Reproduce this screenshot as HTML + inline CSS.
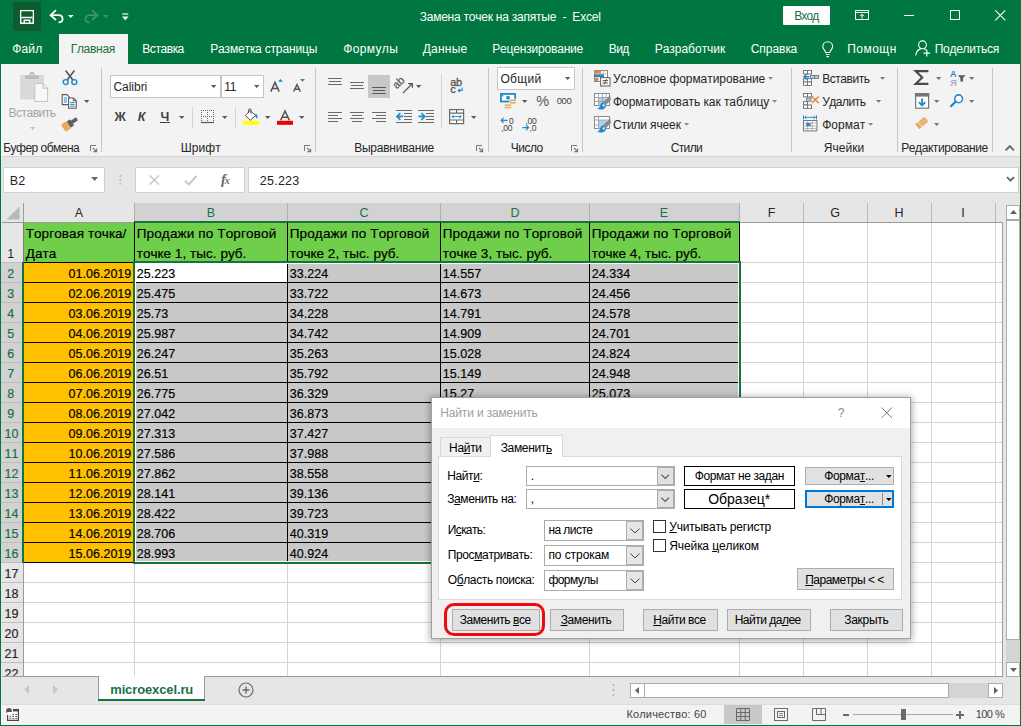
<!DOCTYPE html>
<html><head><meta charset="utf-8">
<style>
*{box-sizing:border-box;margin:0;padding:0}
html,body{width:1021px;height:726px;overflow:hidden;background:#fff}
body{font-family:"Liberation Sans",sans-serif;font-size:12px;color:#262626;position:relative}
#win{position:absolute;left:0;top:0;width:1021px;height:726px;background:#e6e6e6;overflow:hidden}
.b{position:absolute}
.t{position:absolute;white-space:pre;line-height:1;font-kerning:none}
.t u{text-decoration:underline;text-underline-offset:1px}
#grid .t{-webkit-text-stroke:0.18px currentColor}
svg{position:absolute;overflow:visible}
.btn{position:absolute;background:#e1e1e1;border:1px solid #adadad}
.cb{position:absolute;background:#fff;border:1px solid #ababab}
</style></head><body>
<div id="win">
<!--TITLE-->
<div class="b" style="left:0;top:0;width:1021px;height:64px;background:#007640"></div>
<div class="b" style="left:13px;top:2px;width:28px;height:29px;background:#0e5c2f"></div>
<div class="b" style="left:59px;top:34px;width:69px;height:31px;background:#f3f3f3"></div>
<div class="b" style="left:783px;top:6px;width:47px;height:19px;background:#fff;border-radius:1px"></div>
<!--save-->
<svg style="left:20px;top:10px" width="14" height="14"><path d="M0.75 0.75H13.25V13.25H0.75Z" fill="none" stroke="#fff" stroke-width="1.5"/><path d="M1.5 1.5H12.5V7H1.5Z" fill="#0e5c2f"/><path d="M1.5 7.5H12.5" stroke="#fff" stroke-width="1.5"/><path d="M4.25 13V10.25H9.75V13" fill="none" stroke="#fff" stroke-width="1.5"/></svg>
<!--undo-->
<svg style="left:49px;top:9px" width="15" height="14"><path d="M7 1.2L1.6 6.2L7 11" fill="none" stroke="#fff" stroke-width="1.8" stroke-linejoin="miter"/><path d="M2 6.2H9.5C12.5 6.2 13.6 8.3 13.6 10C13.6 11.8 12.3 13.3 9.5 13.3" fill="none" stroke="#fff" stroke-width="1.8"/></svg>
<svg style="left:68px;top:15px" width="6" height="3"><path d="M0 0H5.6L2.8 3Z" fill="#fff"/></svg>
<!--redo-->
<svg style="left:84px;top:9px" width="15" height="14" opacity="1"><path d="M8 1.2L13.4 6.2L8 11" fill="none" stroke="#3f9469" stroke-width="1.8"/><path d="M13 6.2H5.5C2.5 6.2 1.4 8.3 1.4 10C1.4 11.8 2.7 13.3 5.5 13.3" fill="none" stroke="#3f9469" stroke-width="1.8"/></svg>
<svg style="left:103px;top:15px" width="6" height="3"><path d="M0 0H5.6L2.8 3Z" fill="#3f9469"/></svg>
<!--customize-->
<svg style="left:122px;top:13px" width="7" height="8"><path d="M0.3 1H6.3" stroke="#fff" stroke-width="1.2"/><path d="M0 3.6H6.6L3.3 7.2Z" fill="#fff"/></svg>
<!--ribbon display options-->
<svg style="left:855px;top:10px" width="15" height="11"><path d="M0.5 0.5H13.5V9.5H0.5Z" fill="none" stroke="#fff" stroke-width="1"/><path d="M0.5 2.5H13.5" stroke="#fff" stroke-width="1"/><path d="M7 8.5V4.5M5 6.2L7 4.2L9 6.2" fill="none" stroke="#fff" stroke-width="1"/></svg>
<!--min-->
<div class="b" style="left:904px;top:15px;width:10px;height:1px;background:#fff"></div>
<!--max-->
<div class="b" style="left:950px;top:10px;width:10px;height:10px;border:1px solid #fff"></div>
<!--close-->
<svg style="left:995px;top:10px" width="11" height="11"><path d="M0.3 0.3L10.3 10.3M10.3 0.3L0.3 10.3" stroke="#fff" stroke-width="1.1" fill="none"/></svg>
<!--bulb-->
<svg style="left:822px;top:41px" width="12" height="17"><path d="M3.6 11.5C3.6 9.5 0.8 8.5 0.8 5.5C0.8 2.7 3 0.7 5.7 0.7C8.4 0.7 10.6 2.7 10.6 5.5C10.6 8.5 7.8 9.5 7.8 11.5Z" fill="none" stroke="#fff" stroke-width="1.1"/><path d="M3.8 13.5H7.6M4.4 15.6H7" stroke="#fff" stroke-width="1.1"/></svg>
<!--person-->
<svg style="left:915px;top:40px" width="17" height="17"><circle cx="7.5" cy="4.8" r="3.9" fill="none" stroke="#fff" stroke-width="1.1"/><path d="M0.8 15.5C1.2 11 4 9.2 6 8.6" fill="none" stroke="#fff" stroke-width="1.1"/><path d="M9 8.6C10.3 9 11 9.6 11.6 10.3" fill="none" stroke="#fff" stroke-width="1.1"/><path d="M8.5 13.2H15M11.8 10V16.4" stroke="#fff" stroke-width="1.2"/></svg>

<!--RIBBON-->
<div class="b" style="left:2px;top:64px;width:1018px;height:92px;background:#f3f3f3"></div>
<div class="b" style="left:2px;top:156px;width:1018px;height:1px;background:#d4d4d4"></div>
<!--ribbon separators-->
<div class="b" style="left:101px;top:68px;width:1px;height:84px;background:#c6c6c6"></div>
<div class="b" style="left:315px;top:68px;width:1px;height:84px;background:#c6c6c6"></div>
<div class="b" style="left:488px;top:68px;width:1px;height:84px;background:#c6c6c6"></div>
<div class="b" style="left:582px;top:68px;width:1px;height:84px;background:#c6c6c6"></div>
<div class="b" style="left:791px;top:68px;width:1px;height:84px;background:#c6c6c6"></div>
<div class="b" style="left:897px;top:68px;width:1px;height:84px;background:#c6c6c6"></div>
<div class="b" style="left:992px;top:68px;width:1px;height:84px;background:#c6c6c6"></div>
<!--font boxes-->
<div class="b" style="left:110px;top:75px;width:111px;height:23px;background:#fff;border:1px solid #c6c6c6"></div>
<div class="b" style="left:221px;top:75px;width:43px;height:23px;background:#fff;border:1px solid #c6c6c6"></div>
<div class="b" style="left:497px;top:67px;width:78px;height:23px;background:#fff;border:1px solid #c6c6c6"></div>
<div class="b" style="left:368px;top:75px;width:22px;height:23px;background:#c8c8c8"></div>
<!--paste (disabled)-->
<svg style="left:20px;top:72px" width="29" height="31"><rect x="0.2" y="3" width="23.8" height="24.5" rx="1" fill="#d9d9d9"/><path d="M5 7V3.5H9.5V1.5Q9.5 0 11 0H13Q14.5 0 14.5 1.5V3.5H19V7Z" fill="#bcbcbc"/><circle cx="12" cy="2.6" r="1" fill="#ececec"/><path d="M14.8 11.5H23L27.6 16.2V29.5H14.8Z" fill="#f8f8f8" stroke="#c2c2c2" stroke-width="1"/><path d="M23 11.5V16.2H27.6" fill="none" stroke="#c2c2c2" stroke-width="1"/></svg>
<svg style="left:30px;top:127px" width="6" height="3"><path d="M0 0H5.4L2.7 3Z" fill="#c0c0c0"/></svg>
<!--cut-->
<svg style="left:62px;top:70px" width="16" height="16"><path d="M3.6 0.6L11.2 10.6M12.4 0.6L4.8 10.6" stroke="#5a5a5a" stroke-width="1.7" fill="none"/><circle cx="3.7" cy="12.1" r="2.5" fill="none" stroke="#1e8bcd" stroke-width="1.4"/><circle cx="12.3" cy="12.1" r="2.5" fill="none" stroke="#1e8bcd" stroke-width="1.4"/></svg>
<!--copy-->
<svg style="left:61px;top:94px" width="17" height="15"><path d="M1.2 0.6H5.8L8.4 3.2V10.6H1.2Z" fill="#fff" stroke="#5a5a5a" stroke-width="1.1"/><path d="M2.8 4H6M2.8 6H6M2.8 8H6" stroke="#1e8bcd" stroke-width="1"/><path d="M7.6 4H12.4L15.2 6.8V14.2H7.6Z" fill="#fff" stroke="#5a5a5a" stroke-width="1.1"/><path d="M12.2 4V7H15.2" fill="none" stroke="#5a5a5a" stroke-width="0.9"/><path d="M9.2 8.6H13.6M9.2 10.4H13.6M9.2 12.2H13.6" stroke="#1e8bcd" stroke-width="1"/></svg>
<svg style="left:84px;top:100px" width="6" height="3"><path d="M0 0H5.4L2.7 3Z" fill="#5a5a5a"/></svg>
<!--format painter-->
<svg style="left:62px;top:116px" width="17" height="16"><g transform="rotate(-35 8.5 8)"><rect x="10.2" y="5.6" width="6.6" height="3.6" fill="#5f5f5f"/><rect x="6.6" y="3.8" width="4.2" height="7.4" rx="0.8" fill="#5f5f5f"/><path d="M6.4 3.2V11.8H2Q0.2 11.8 0.2 10V5Q0.2 3.2 2 3.2Z" fill="#e9a659"/><path d="M2 6V6.8M4 8.8V9.6" stroke="#f8d8a8" stroke-width="0.9"/></g></svg>
<!--font group-->
<svg style="left:211px;top:85px" width="6" height="3"><path d="M0 0H5.4L2.7 3Z" fill="#5a5a5a"/></svg>
<svg style="left:254px;top:85px" width="6" height="3"><path d="M0 0H5.4L2.7 3Z" fill="#5a5a5a"/></svg>
<svg style="left:179px;top:116px" width="6" height="3"><path d="M0 0H5.4L2.7 3Z" fill="#5a5a5a"/></svg>
<div class="b" style="left:192px;top:107px;width:1px;height:21px;background:#d4d4d4"></div>
<div class="b" style="left:235px;top:107px;width:1px;height:21px;background:#d4d4d4"></div>
<!--grow/shrink font-->
<svg style="left:270px;top:78px" width="14" height="14"><path d="M0.8 13.6L5 4.4L9.2 13.6M2.4 10.4H7.6" fill="none" stroke="#555" stroke-width="1.5"/><path d="M8 3.8H13L10.5 1Z" fill="#1e8bcd"/></svg>
<svg style="left:293px;top:78px" width="14" height="14"><path d="M0.6 13.6L4 6.6L7.4 13.6M1.9 11.2H6.1" fill="none" stroke="#555" stroke-width="1.4"/><path d="M7 1H12L9.5 3.8Z" fill="#1e8bcd"/></svg>
<!--borders-->
<svg style="left:201px;top:110px" width="14" height="14"><g stroke="#666" stroke-width="1" stroke-dasharray="1 1" fill="none"><path d="M0 0.5H13M0 6.5H13M0.5 0V12M6.5 0V12M12.5 0V12"/></g><path d="M0 12.5H13" stroke="#555" stroke-width="1.2"/></svg>
<svg style="left:222px;top:116px" width="6" height="3"><path d="M0 0H5.4L2.7 3Z" fill="#5a5a5a"/></svg>
<!--fill color-->
<svg style="left:243px;top:108px" width="17" height="17"><rect x="0" y="12.8" width="16" height="4" fill="#ffff00"/><path d="M7.2 2.6L12.6 7.4L7.4 12.2L2.2 7.4Z" fill="#fff" stroke="#555" stroke-width="1"/><path d="M5.6 5.2V2Q5.6 0.8 6.8 0.8Q8 0.8 8 2V5.6" fill="none" stroke="#555" stroke-width="1"/><path d="M12.6 5.4Q15.6 7.4 14 11Q13 9 12.2 8.2Z" fill="#1e8bcd"/></svg>
<svg style="left:265px;top:116px" width="6" height="3"><path d="M0 0H5.4L2.7 3Z" fill="#5a5a5a"/></svg>
<!--font color-->
<svg style="left:277px;top:110px" width="17" height="15"><rect x="0" y="10.8" width="16" height="4" fill="#ee0000"/><path d="M3.6 10.4L8 1L12.4 10.4M5.2 7.2H10.8" fill="none" stroke="#555" stroke-width="1.5"/></svg>
<svg style="left:299px;top:116px" width="6" height="3"><path d="M0 0H5.4L2.7 3Z" fill="#5a5a5a"/></svg>
<svg style="left:90px;top:145px" width="8" height="8"><path d="M0.5 6V0.5H6" fill="none" stroke="#777" stroke-width="1"/><path d="M3 3L6 6M6.6 3.4V6.6H3.4" fill="none" stroke="#777" stroke-width="1.1"/></svg>
<svg style="left:304px;top:145px" width="8" height="8"><path d="M0.5 6V0.5H6" fill="none" stroke="#777" stroke-width="1"/><path d="M3 3L6 6M6.6 3.4V6.6H3.4" fill="none" stroke="#777" stroke-width="1.1"/></svg>
<svg style="left:476px;top:145px" width="8" height="8"><path d="M0.5 6V0.5H6" fill="none" stroke="#777" stroke-width="1"/><path d="M3 3L6 6M6.6 3.4V6.6H3.4" fill="none" stroke="#777" stroke-width="1.1"/></svg>
<svg style="left:571px;top:145px" width="8" height="8"><path d="M0.5 6V0.5H6" fill="none" stroke="#777" stroke-width="1"/><path d="M3 3L6 6M6.6 3.4V6.6H3.4" fill="none" stroke="#777" stroke-width="1.1"/></svg>
<div class="b" style="left:160px;top:122px;width:10px;height:1px;background:#444"></div>

<!--alignment group-->
<div class="b" style="left:328px;top:78px;width:14px;height:1px;background:#6a6a6a"></div>
<div class="b" style="left:329px;top:81px;width:12px;height:1px;background:#6a6a6a"></div>
<div class="b" style="left:328px;top:84px;width:14px;height:1px;background:#6a6a6a"></div>
<div class="b" style="left:350px;top:82px;width:14px;height:1px;background:#6a6a6a"></div>
<div class="b" style="left:351px;top:85px;width:12px;height:1px;background:#6a6a6a"></div>
<div class="b" style="left:350px;top:88px;width:14px;height:1px;background:#6a6a6a"></div>
<div class="b" style="left:372px;top:87px;width:14px;height:1px;background:#5a5a5a"></div>
<div class="b" style="left:373px;top:90px;width:12px;height:1px;background:#5a5a5a"></div>
<div class="b" style="left:372px;top:93px;width:14px;height:1px;background:#5a5a5a"></div>
<div class="b" style="left:328px;top:112px;width:14px;height:1px;background:#6a6a6a"></div>
<div class="b" style="left:328px;top:115px;width:10px;height:1px;background:#6a6a6a"></div>
<div class="b" style="left:328px;top:118px;width:14px;height:1px;background:#6a6a6a"></div>
<div class="b" style="left:328px;top:121px;width:10px;height:1px;background:#6a6a6a"></div>
<div class="b" style="left:350px;top:112px;width:14px;height:1px;background:#6a6a6a"></div>
<div class="b" style="left:352px;top:115px;width:10px;height:1px;background:#6a6a6a"></div>
<div class="b" style="left:350px;top:118px;width:14px;height:1px;background:#6a6a6a"></div>
<div class="b" style="left:352px;top:121px;width:10px;height:1px;background:#6a6a6a"></div>
<div class="b" style="left:372px;top:112px;width:14px;height:1px;background:#6a6a6a"></div>
<div class="b" style="left:376px;top:115px;width:10px;height:1px;background:#6a6a6a"></div>
<div class="b" style="left:372px;top:118px;width:14px;height:1px;background:#6a6a6a"></div>
<div class="b" style="left:376px;top:121px;width:10px;height:1px;background:#6a6a6a"></div>
<div class="b" style="left:396px;top:110px;width:16px;height:1px;background:#6a6a6a"></div>
<div class="b" style="left:404px;top:113px;width:8px;height:1px;background:#6a6a6a"></div>
<div class="b" style="left:404px;top:116px;width:8px;height:1px;background:#6a6a6a"></div>
<div class="b" style="left:404px;top:119px;width:8px;height:1px;background:#6a6a6a"></div>
<div class="b" style="left:396px;top:122px;width:16px;height:1px;background:#6a6a6a"></div>
<div class="b" style="left:418px;top:110px;width:16px;height:1px;background:#6a6a6a"></div>
<div class="b" style="left:426px;top:113px;width:8px;height:1px;background:#6a6a6a"></div>
<div class="b" style="left:426px;top:116px;width:8px;height:1px;background:#6a6a6a"></div>
<div class="b" style="left:426px;top:119px;width:8px;height:1px;background:#6a6a6a"></div>
<div class="b" style="left:418px;top:122px;width:16px;height:1px;background:#6a6a6a"></div>
<svg style="left:396px;top:112px" width="8" height="9"><path d="M7.2 4.4H1.4M4.4 1L1 4.4L4.4 7.8" fill="none" stroke="#1e8bcd" stroke-width="1.7"/></svg>
<svg style="left:418px;top:112px" width="8" height="9"><path d="M0.4 4.4H6.4M3.4 1L6.8 4.4L3.4 7.8" fill="none" stroke="#1e8bcd" stroke-width="1.7"/></svg>
<!--orientation-->
<svg style="left:395px;top:77px" width="19" height="17"><g transform="translate(-1.2,-1.6) rotate(-45 6.5 8.5)"><text x="0" y="10" font-family="Liberation Sans" font-size="11" fill="#555" stroke="#555" stroke-width="0.2">ab</text></g><path d="M8 16L17 7M13 6.6H17.4V11" fill="none" stroke="#555" stroke-width="1.1"/></svg>
<svg style="left:416px;top:85px" width="6" height="3"><path d="M0 0H5.4L2.7 3Z" fill="#5a5a5a"/></svg>
<div class="b" style="left:441px;top:74px;width:1px;height:55px;background:#d4d4d4"></div>
<!--wrap text-->
<svg style="left:450px;top:77px" width="15" height="17"><text x="0.2" y="9.4" font-family="Liberation Sans" font-size="11" fill="#555" stroke="#555" stroke-width="0.3" letter-spacing="-0.2">ab</text><text x="0.2" y="16.4" font-family="Liberation Sans" font-size="11" fill="#555" stroke="#555" stroke-width="0.3">c</text><path d="M12.2 10.6V13.4H8.4M10 11.8L8.2 13.4L10 15" fill="none" stroke="#1e8bcd" stroke-width="1.1"/></svg>
<!--merge-->
<svg style="left:449px;top:109px" width="16" height="16"><rect x="0.6" y="0.6" width="14" height="14" fill="#fff" stroke="#6a6a6a" stroke-width="1.2"/><path d="M0.6 4.2H14.6M0.6 11H14.6M7.6 0.6V4.2M7.6 11V14.6" stroke="#6a6a6a" stroke-width="1.2"/><path d="M3 7.6H12.2M4.8 5.8L3 7.6L4.8 9.4M10.4 5.8L12.2 7.6L10.4 9.4" fill="none" stroke="#1e8bcd" stroke-width="1"/></svg>
<svg style="left:471px;top:116px" width="6" height="3"><path d="M0 0H5.4L2.7 3Z" fill="#5a5a5a"/></svg>
<!--number group-->
<svg style="left:565px;top:77px" width="6" height="3"><path d="M0 0H5.4L2.7 3Z" fill="#5a5a5a"/></svg>
<svg style="left:500px;top:93px" width="17" height="17"><rect x="0.9" y="0.9" width="14.2" height="7.6" fill="#fff" stroke="#1e8bcd" stroke-width="1.8"/><circle cx="8" cy="4.7" r="1.9" fill="#1e8bcd"/><rect x="1.8" y="1.8" width="1.6" height="1.6" fill="#1e8bcd"/><rect x="12.6" y="6" width="1.6" height="1.6" fill="#1e8bcd"/><g fill="#e9a659" stroke="#f3f3f3" stroke-width="0.8"><rect x="9.2" y="6.2" width="7" height="2.4" rx="1"/><rect x="9.2" y="8.6" width="7" height="2.4" rx="1"/><rect x="4.4" y="11" width="7" height="2.4" rx="1"/><rect x="4.4" y="13.4" width="7" height="2.4" rx="1"/></g></svg>
<svg style="left:522px;top:100px" width="6" height="3"><path d="M0 0H5.4L2.7 3Z" fill="#5a5a5a"/></svg>
<!--inc/dec decimal-->
<svg style="left:500px;top:117px" width="16" height="15"><text x="9" y="6.6" font-family="Liberation Sans" font-size="8.6" fill="#444">0</text><text x="1.2" y="13.8" font-family="Liberation Sans" font-size="8.6" fill="#444" letter-spacing="-0.3">,00</text><path d="M7.6 3.4H1.2M3.6 1L1.2 3.4L3.6 5.8" fill="none" stroke="#1e8bcd" stroke-width="1.2"/></svg>
<svg style="left:522px;top:117px" width="16" height="15"><text x="3.4" y="6.6" font-family="Liberation Sans" font-size="8.6" fill="#444" letter-spacing="-0.3">,00</text><text x="7.6" y="13.8" font-family="Liberation Sans" font-size="8.6" fill="#444" letter-spacing="-0.3">,0</text><path d="M0.4 10.6H6.6M4.2 8.2L6.6 10.6L4.2 13" fill="none" stroke="#1e8bcd" stroke-width="1.2"/></svg>

<!--styles group-->
<svg style="left:594px;top:70px" width="17" height="17"><rect x="0.5" y="0.5" width="13" height="11" fill="#fff" stroke="#8a8a8a" stroke-width="1"/><rect x="0" y="0.5" width="7" height="3" fill="#ed7d31"/><rect x="0" y="4.2" width="10" height="3" fill="#1e8bcd"/><rect x="0" y="7.9" width="4.5" height="3" fill="#ed7d31"/><path d="M9.5 0.5V3.5M0.5 3.8H13.5" stroke="#b0b0b0" stroke-width="0.8" fill="none"/><rect x="6.6" y="7.6" width="9.4" height="8.4" fill="#fff" stroke="#6a6a6a" stroke-width="1.1"/><path d="M8.6 10.6H14M8.6 13H14M12.6 9.2L10 14.4" stroke="#444" stroke-width="0.9" fill="none"/></svg>
<svg style="left:594px;top:93px" width="17" height="17"><rect x="0.5" y="0.5" width="15" height="12" fill="#fff" stroke="#8a8a8a" stroke-width="1"/><rect x="4.5" y="4.5" width="7.5" height="8" fill="#a9d3e6"/><path d="M0.5 4.5H15.5M0.5 8.5H12M4.5 0.5V12.5M8.5 0.5V12.5M12.2 0.5V5" stroke="#a0a0a0" stroke-width="0.9" fill="none"/><path d="M16 2.2L17 6.8L12 12L9.2 9.2Z" fill="#8a8a8a"/><path d="M9.2 9.2L12 12Q12.2 15 9.2 16.2Q6 17.2 3.2 15.8Q5.8 14.6 6 12.4Q6.6 9.6 9.2 9.2Z" fill="#1e8bcd"/><circle cx="9.7" cy="12.4" r="1.1" fill="#fff"/></svg>
<svg style="left:594px;top:116px" width="17" height="17"><rect x="0.5" y="0.5" width="15" height="12" fill="#fff" stroke="#8a8a8a" stroke-width="1"/><rect x="4.5" y="4" width="8" height="8.5" fill="#a9d3e6"/><path d="M0.5 4H15.5M4.5 0.5V12.5M0.5 9H4.5" stroke="#a0a0a0" stroke-width="0.9" fill="none"/><path d="M16 2.2L17 6.8L12 12L9.2 9.2Z" fill="#8a8a8a"/><path d="M9.2 9.2L12 12Q12.2 15 9.2 16.2Q6 17.2 3.2 15.8Q5.8 14.6 6 12.4Q6.6 9.6 9.2 9.2Z" fill="#1e8bcd"/><circle cx="9.7" cy="12.4" r="1.1" fill="#fff"/></svg>
<svg style="left:768px;top:77px" width="6" height="3"><path d="M0 0H5.2L2.6 2.8Z" fill="#8a8a8a"/></svg>
<svg style="left:772px;top:100px" width="6" height="3"><path d="M0 0H5.2L2.6 2.8Z" fill="#8a8a8a"/></svg>
<svg style="left:684px;top:123px" width="6" height="3"><path d="M0 0H5.2L2.6 2.8Z" fill="#8a8a8a"/></svg>
<!--cells group-->
<svg style="left:803px;top:70px" width="17" height="16"><g fill="#fff" stroke="#777" stroke-width="1"><rect x="0.5" y="0.5" width="4" height="3.4"/><rect x="4.5" y="0.5" width="4" height="3.4"/><rect x="0.5" y="8.6" width="4" height="3.4"/><rect x="4.5" y="8.6" width="4" height="3.4"/><rect x="0.5" y="12" width="4" height="3.4"/><rect x="4.5" y="12" width="4" height="3.4"/></g><rect x="7.6" y="5.4" width="4" height="3" fill="#a9d3e6" stroke="#777" stroke-width="0.9"/><rect x="11.6" y="5.4" width="4" height="3" fill="#a9d3e6" stroke="#777" stroke-width="0.9"/><path d="M6.4 6.8H1M3.6 4.2L1 6.8L3.6 9.4" fill="none" stroke="#1e8bcd" stroke-width="1.5"/></svg>
<svg style="left:803px;top:93px" width="17" height="16"><g fill="#fff" stroke="#777" stroke-width="1"><rect x="0.5" y="0.5" width="4" height="3.4"/><rect x="4.5" y="0.5" width="4" height="3.4"/><rect x="0.5" y="8.6" width="4" height="3.4"/><rect x="0.5" y="12" width="4" height="3.4"/><rect x="4.5" y="12" width="4" height="3.4"/></g><rect x="3.6" y="5" width="4.4" height="3.2" fill="#a9d3e6" stroke="#777" stroke-width="0.9"/><path d="M9 3.4L15.6 10M15.6 3.4L9 10" stroke="#ed7d31" stroke-width="1.4" fill="none"/></svg>
<svg style="left:803px;top:115px" width="16" height="17"><path d="M0.5 0.4V4.4M13.5 0.4V4.4" stroke="#1e8bcd" stroke-width="1"/><path d="M1.6 2.4H12.4M3.4 0.8L1.6 2.4L3.4 4M10.6 0.8L12.4 2.4L10.6 4" fill="none" stroke="#1e8bcd" stroke-width="0.9"/><rect x="0.5" y="5.5" width="13.4" height="10.4" fill="#fff" stroke="#777" stroke-width="1"/><path d="M0.5 8H14M0.5 11H14M0.5 13.6H14M4.6 5.5V16M9.2 5.5V16" stroke="#a0a0a0" stroke-width="0.8" fill="none"/><rect x="3.2" y="8" width="4.4" height="3.2" fill="#1e8bcd"/></svg>
<svg style="left:880px;top:77px" width="6" height="3"><path d="M0 0H5.2L2.6 2.8Z" fill="#777"/></svg>
<svg style="left:876px;top:100px" width="6" height="3"><path d="M0 0H5.2L2.6 2.8Z" fill="#777"/></svg>
<svg style="left:868px;top:123px" width="6" height="3"><path d="M0 0H5.2L2.6 2.8Z" fill="#8a8a8a"/></svg>
<!--editing group-->
<svg style="left:914px;top:70px" width="16" height="16"><path d="M14.4 1.1H1.6L8.2 7.5L1.6 13.9H14.4" fill="none" stroke="#4a4a4a" stroke-width="2.1" stroke-linejoin="miter"/></svg>
<svg style="left:936px;top:77px" width="6" height="3"><path d="M0 0H5.4L2.7 3Z" fill="#777"/></svg>
<svg style="left:950px;top:69px" width="17" height="18"><text x="0" y="7.6" font-family="Liberation Sans" font-weight="bold" font-size="9" fill="#1e8bcd">A</text><text x="0.2" y="16.6" font-family="Liberation Sans" font-weight="bold" font-size="9" fill="#b7a6c4">Я</text><path d="M7.8 6.2H15.6L13 9V12.6H10.4V9Z" fill="#5a5a5a"/></svg>
<svg style="left:969px;top:77px" width="6" height="3"><path d="M0 0H5.4L2.7 3Z" fill="#777"/></svg>
<svg style="left:915px;top:93px" width="15" height="16"><rect x="0.6" y="0.6" width="13" height="14.6" fill="#fff" stroke="#777" stroke-width="1.2"/><rect x="0" y="0" width="14.2" height="3.6" fill="#777"/><path d="M7.1 5.4V12.4M3.9 9.2L7.1 12.4L10.3 9.2" fill="none" stroke="#1e8bcd" stroke-width="1.8"/></svg>
<svg style="left:934px;top:100px" width="6" height="3"><path d="M0 0H5.4L2.7 3Z" fill="#777"/></svg>
<svg style="left:950px;top:94px" width="14" height="14"><circle cx="8.6" cy="4.8" r="3.9" fill="#fff" stroke="#1e8bcd" stroke-width="1.6"/><path d="M5.6 7.6L1 12.2" stroke="#1e8bcd" stroke-width="2.2" stroke-linecap="round"/></svg>
<svg style="left:969px;top:100px" width="6" height="3"><path d="M0 0H5.4L2.7 3Z" fill="#777"/></svg>
<svg style="left:915px;top:116px" width="14" height="14"><g transform="rotate(-40 7 7)"><rect x="1" y="3.6" width="3" height="6.4" fill="#e9a659"/><rect x="4.6" y="3.6" width="8.4" height="6.4" rx="1.2" fill="#eab27a"/></g></svg>
<svg style="left:934px;top:123px" width="6" height="3"><path d="M0 0H5.4L2.7 3Z" fill="#777"/></svg>
<svg style="left:1005px;top:145px" width="10" height="6"><path d="M0.6 5.4L4.8 1.2L9 5.4" fill="none" stroke="#6e6e6e" stroke-width="2"/></svg>

<!--FORMULA-->
<div class="b" style="left:3px;top:167px;width:102px;height:26px;background:#fff;border:1px solid #d0d0d0"></div>
<div class="b" style="left:135px;top:167px;width:110px;height:26px;background:#fff;border:1px solid #d0d0d0"></div>
<div class="b" style="left:248px;top:167px;width:771px;height:26px;background:#fff;border:1px solid #d0d0d0"></div>
<svg style="left:91px;top:177px" width="8" height="4"><path d="M0 0H7.2L3.6 4Z" fill="#6a6a6a"/></svg>
<svg style="left:119px;top:174px" width="3" height="11"><rect x="0.5" y="1" width="1.6" height="1.6" fill="#b4b4b4"/><rect x="0.5" y="5" width="1.6" height="1.6" fill="#b4b4b4"/><rect x="0.5" y="9" width="1.6" height="1.6" fill="#b4b4b4"/></svg>
<svg style="left:149px;top:175px" width="11" height="10"><path d="M0.6 0.6L10 9.4M10 0.6L0.6 9.4" stroke="#c3c3c3" stroke-width="1.4" fill="none"/></svg>
<svg style="left:184px;top:175px" width="14" height="11"><path d="M0.8 5.6L4.8 9.4L12.6 0.8" stroke="#c3c3c3" stroke-width="1.8" fill="none"/></svg>
<div class="t" style="left:221px;top:171.5px;font-family:'Liberation Serif',serif;font-style:italic;font-size:15px;color:#6a6a6a;font-weight:bold">f<span style="font-size:10px;position:relative;left:-1.2px;top:0.6px">x</span></div>
<svg style="left:1006px;top:176px" width="9" height="6"><path d="M1 1.2L4.5 4.6L8 1.2" fill="none" stroke="#5a5a5a" stroke-width="1.7"/></svg>

<!--GRID-->
<div id="grid" class="b" style="left:0;top:0;width:1021px;height:676px;overflow:hidden">
<div class="b" style="left:24px;top:223px;width:979px;height:453px;background:#fff;"></div>
<div class="b" style="left:1px;top:203px;width:1002px;height:19px;background:#e6e6e6;"></div>
<div class="b" style="left:135px;top:203px;width:605px;height:19px;background:#d2d2d2;"></div>
<div class="b" style="left:1px;top:263px;width:22px;height:299px;background:#d2d2d2;"></div>
<svg style="left:6px;top:206px" width="14" height="14"><path d="M13.5 0.5V13.5H0.5Z" fill="#b8b8b8"/></svg>
<div class="b" style="left:23px;top:203px;width:1px;height:19px;background:#b9b9b9;"></div>
<div class="b" style="left:134px;top:203px;width:1px;height:19px;background:#b0b0b0;"></div>
<div class="b" style="left:287px;top:203px;width:1px;height:19px;background:#b0b0b0;"></div>
<div class="b" style="left:440px;top:203px;width:1px;height:19px;background:#b0b0b0;"></div>
<div class="b" style="left:589px;top:203px;width:1px;height:19px;background:#b0b0b0;"></div>
<div class="b" style="left:739px;top:203px;width:1px;height:19px;background:#b0b0b0;"></div>
<div class="b" style="left:803px;top:203px;width:1px;height:19px;background:#b9b9b9;"></div>
<div class="b" style="left:867px;top:203px;width:1px;height:19px;background:#b9b9b9;"></div>
<div class="b" style="left:931px;top:203px;width:1px;height:19px;background:#b9b9b9;"></div>
<div class="b" style="left:995px;top:203px;width:1px;height:19px;background:#b9b9b9;"></div>
<div class="b" style="left:1px;top:262px;width:22px;height:1px;background:#bdbdbd;"></div>
<div class="b" style="left:1px;top:282px;width:22px;height:1px;background:#bdbdbd;"></div>
<div class="b" style="left:1px;top:302px;width:22px;height:1px;background:#bdbdbd;"></div>
<div class="b" style="left:1px;top:322px;width:22px;height:1px;background:#bdbdbd;"></div>
<div class="b" style="left:1px;top:342px;width:22px;height:1px;background:#bdbdbd;"></div>
<div class="b" style="left:1px;top:362px;width:22px;height:1px;background:#bdbdbd;"></div>
<div class="b" style="left:1px;top:382px;width:22px;height:1px;background:#bdbdbd;"></div>
<div class="b" style="left:1px;top:402px;width:22px;height:1px;background:#bdbdbd;"></div>
<div class="b" style="left:1px;top:422px;width:22px;height:1px;background:#bdbdbd;"></div>
<div class="b" style="left:1px;top:442px;width:22px;height:1px;background:#bdbdbd;"></div>
<div class="b" style="left:1px;top:462px;width:22px;height:1px;background:#bdbdbd;"></div>
<div class="b" style="left:1px;top:482px;width:22px;height:1px;background:#bdbdbd;"></div>
<div class="b" style="left:1px;top:502px;width:22px;height:1px;background:#bdbdbd;"></div>
<div class="b" style="left:1px;top:522px;width:22px;height:1px;background:#bdbdbd;"></div>
<div class="b" style="left:1px;top:542px;width:22px;height:1px;background:#bdbdbd;"></div>
<div class="b" style="left:1px;top:562px;width:22px;height:1px;background:#bdbdbd;"></div>
<div class="b" style="left:1px;top:582px;width:22px;height:1px;background:#bdbdbd;"></div>
<div class="b" style="left:1px;top:602px;width:22px;height:1px;background:#bdbdbd;"></div>
<div class="b" style="left:1px;top:622px;width:22px;height:1px;background:#bdbdbd;"></div>
<div class="b" style="left:1px;top:642px;width:22px;height:1px;background:#bdbdbd;"></div>
<div class="b" style="left:1px;top:662px;width:22px;height:1px;background:#bdbdbd;"></div>
<div class="b" style="left:1px;top:682px;width:22px;height:1px;background:#bdbdbd;"></div>
<div class="b" style="left:134px;top:223px;width:1px;height:453px;background:#d4d4d4;"></div>
<div class="b" style="left:287px;top:223px;width:1px;height:453px;background:#d4d4d4;"></div>
<div class="b" style="left:440px;top:223px;width:1px;height:453px;background:#d4d4d4;"></div>
<div class="b" style="left:589px;top:223px;width:1px;height:453px;background:#d4d4d4;"></div>
<div class="b" style="left:739px;top:223px;width:1px;height:453px;background:#d4d4d4;"></div>
<div class="b" style="left:803px;top:223px;width:1px;height:453px;background:#d4d4d4;"></div>
<div class="b" style="left:867px;top:223px;width:1px;height:453px;background:#d4d4d4;"></div>
<div class="b" style="left:931px;top:223px;width:1px;height:453px;background:#d4d4d4;"></div>
<div class="b" style="left:995px;top:223px;width:1px;height:453px;background:#d4d4d4;"></div>
<div class="b" style="left:24px;top:262px;width:979px;height:1px;background:#d4d4d4;"></div>
<div class="b" style="left:24px;top:282px;width:979px;height:1px;background:#d4d4d4;"></div>
<div class="b" style="left:24px;top:302px;width:979px;height:1px;background:#d4d4d4;"></div>
<div class="b" style="left:24px;top:322px;width:979px;height:1px;background:#d4d4d4;"></div>
<div class="b" style="left:24px;top:342px;width:979px;height:1px;background:#d4d4d4;"></div>
<div class="b" style="left:24px;top:362px;width:979px;height:1px;background:#d4d4d4;"></div>
<div class="b" style="left:24px;top:382px;width:979px;height:1px;background:#d4d4d4;"></div>
<div class="b" style="left:24px;top:402px;width:979px;height:1px;background:#d4d4d4;"></div>
<div class="b" style="left:24px;top:422px;width:979px;height:1px;background:#d4d4d4;"></div>
<div class="b" style="left:24px;top:442px;width:979px;height:1px;background:#d4d4d4;"></div>
<div class="b" style="left:24px;top:462px;width:979px;height:1px;background:#d4d4d4;"></div>
<div class="b" style="left:24px;top:482px;width:979px;height:1px;background:#d4d4d4;"></div>
<div class="b" style="left:24px;top:502px;width:979px;height:1px;background:#d4d4d4;"></div>
<div class="b" style="left:24px;top:522px;width:979px;height:1px;background:#d4d4d4;"></div>
<div class="b" style="left:24px;top:542px;width:979px;height:1px;background:#d4d4d4;"></div>
<div class="b" style="left:24px;top:562px;width:979px;height:1px;background:#d4d4d4;"></div>
<div class="b" style="left:24px;top:582px;width:979px;height:1px;background:#d4d4d4;"></div>
<div class="b" style="left:24px;top:602px;width:979px;height:1px;background:#d4d4d4;"></div>
<div class="b" style="left:24px;top:622px;width:979px;height:1px;background:#d4d4d4;"></div>
<div class="b" style="left:24px;top:642px;width:979px;height:1px;background:#d4d4d4;"></div>
<div class="b" style="left:24px;top:662px;width:979px;height:1px;background:#d4d4d4;"></div>
<div class="b" style="left:24px;top:682px;width:979px;height:1px;background:#d4d4d4;"></div>
<div class="b" style="left:2px;top:222px;width:1001px;height:1px;background:#9b9b9b;"></div>
<div class="b" style="left:23px;top:203px;width:1px;height:473px;background:#9b9b9b;"></div>
<div class="b" style="left:1002px;top:222px;width:1px;height:455px;background:#9b9b9b;"></div>
<div class="b" style="left:24px;top:223px;width:715px;height:39px;background:#6fcf4a;"></div>
<div class="b" style="left:24px;top:263px;width:110px;height:299px;background:#ffc000;"></div>
<div class="b" style="left:135px;top:263px;width:604px;height:299px;background:#c8c8c8;"></div>
<div class="b" style="left:135px;top:263px;width:152px;height:19px;background:#fff;"></div>
<div class="b" style="left:287px;top:223px;width:1px;height:340px;background:#000;"></div>
<div class="b" style="left:440px;top:223px;width:1px;height:340px;background:#000;"></div>
<div class="b" style="left:589px;top:223px;width:1px;height:340px;background:#000;"></div>
<div class="b" style="left:134px;top:223px;width:1px;height:40px;background:#000;"></div>
<div class="b" style="left:739px;top:223px;width:1px;height:40px;background:#000;"></div>
<div class="b" style="left:24px;top:282px;width:110px;height:1px;background:#000;"></div>
<div class="b" style="left:136px;top:282px;width:602px;height:1px;background:#000;"></div>
<div class="b" style="left:24px;top:302px;width:110px;height:1px;background:#000;"></div>
<div class="b" style="left:136px;top:302px;width:602px;height:1px;background:#000;"></div>
<div class="b" style="left:24px;top:322px;width:110px;height:1px;background:#000;"></div>
<div class="b" style="left:136px;top:322px;width:602px;height:1px;background:#000;"></div>
<div class="b" style="left:24px;top:342px;width:110px;height:1px;background:#000;"></div>
<div class="b" style="left:136px;top:342px;width:602px;height:1px;background:#000;"></div>
<div class="b" style="left:24px;top:362px;width:110px;height:1px;background:#000;"></div>
<div class="b" style="left:136px;top:362px;width:602px;height:1px;background:#000;"></div>
<div class="b" style="left:24px;top:382px;width:110px;height:1px;background:#000;"></div>
<div class="b" style="left:136px;top:382px;width:602px;height:1px;background:#000;"></div>
<div class="b" style="left:24px;top:402px;width:110px;height:1px;background:#000;"></div>
<div class="b" style="left:136px;top:402px;width:602px;height:1px;background:#000;"></div>
<div class="b" style="left:24px;top:422px;width:110px;height:1px;background:#000;"></div>
<div class="b" style="left:136px;top:422px;width:602px;height:1px;background:#000;"></div>
<div class="b" style="left:24px;top:442px;width:110px;height:1px;background:#000;"></div>
<div class="b" style="left:136px;top:442px;width:602px;height:1px;background:#000;"></div>
<div class="b" style="left:24px;top:462px;width:110px;height:1px;background:#000;"></div>
<div class="b" style="left:136px;top:462px;width:602px;height:1px;background:#000;"></div>
<div class="b" style="left:24px;top:482px;width:110px;height:1px;background:#000;"></div>
<div class="b" style="left:136px;top:482px;width:602px;height:1px;background:#000;"></div>
<div class="b" style="left:24px;top:502px;width:110px;height:1px;background:#000;"></div>
<div class="b" style="left:136px;top:502px;width:602px;height:1px;background:#000;"></div>
<div class="b" style="left:24px;top:522px;width:110px;height:1px;background:#000;"></div>
<div class="b" style="left:136px;top:522px;width:602px;height:1px;background:#000;"></div>
<div class="b" style="left:24px;top:542px;width:110px;height:1px;background:#000;"></div>
<div class="b" style="left:136px;top:542px;width:602px;height:1px;background:#000;"></div>
<div class="b" style="left:24px;top:562px;width:110px;height:1px;background:#000;"></div>
<div class="b" style="left:24px;top:262px;width:110px;height:1px;background:#000;"></div>
<div class="b" style="left:23px;top:223px;width:1px;height:40px;background:#7a7a7a;"></div>
<div class="b" style="left:135px;top:263px;width:604px;height:299px;background:transparent;border:1px solid #fff;"></div>
<div class="b" style="left:133px;top:261px;width:608px;height:303px;background:transparent;border:2px solid #15733f;"></div>
<div class="b" style="left:134px;top:221px;width:606px;height:2px;background:#15733f;"></div>
<div class="b" style="left:22px;top:262px;width:2px;height:301px;background:#15733f;"></div>

<div class="t" style="left:7.22px;top:267.75px;font-size:12.5px;color:#1a7044;">2</div>
<div class="t" style="left:7.22px;top:287.75px;font-size:12.5px;color:#1a7044;">3</div>
<div class="t" style="left:7.22px;top:307.75px;font-size:12.5px;color:#1a7044;">4</div>
<div class="t" style="left:7.22px;top:327.75px;font-size:12.5px;color:#1a7044;">5</div>
<div class="t" style="left:7.22px;top:347.75px;font-size:12.5px;color:#1a7044;">6</div>
<div class="t" style="left:7.22px;top:367.75px;font-size:12.5px;color:#1a7044;">7</div>
<div class="t" style="left:7.22px;top:387.75px;font-size:12.5px;color:#1a7044;">8</div>
<div class="t" style="left:7.22px;top:407.75px;font-size:12.5px;color:#1a7044;">9</div>
<div class="t" style="left:4.55px;top:427.75px;font-size:12.5px;color:#1a7044;">10</div>
<div class="t" style="left:4.55px;top:447.75px;font-size:12.5px;color:#1a7044;">11</div>
<div class="t" style="left:4.55px;top:467.75px;font-size:12.5px;color:#1a7044;">12</div>
<div class="t" style="left:4.55px;top:487.75px;font-size:12.5px;color:#1a7044;">13</div>
<div class="t" style="left:4.55px;top:507.75px;font-size:12.5px;color:#1a7044;">14</div>
<div class="t" style="left:4.55px;top:527.75px;font-size:12.5px;color:#1a7044;">15</div>
<div class="t" style="left:4.55px;top:547.75px;font-size:12.5px;color:#1a7044;">16</div>
<div class="t" style="left:4.55px;top:567.75px;font-size:12.5px;color:#262626;">17</div>
<div class="t" style="left:4.55px;top:587.75px;font-size:12.5px;color:#262626;">18</div>
<div class="t" style="left:4.55px;top:607.75px;font-size:12.5px;color:#262626;">19</div>
<div class="t" style="left:4.55px;top:627.75px;font-size:12.5px;color:#262626;">20</div>
<div class="t" style="left:4.55px;top:647.75px;font-size:12.5px;color:#262626;">21</div>
<div class="t" style="left:4.55px;top:667.75px;font-size:12.5px;color:#262626;">22</div>
<div class="t" style="left:136.70px;top:267.75px;font-size:12.5px;color:#000;letter-spacing:0.073px;">25.223</div>
<div class="t" style="left:136.70px;top:287.75px;font-size:12.5px;color:#000;letter-spacing:0.073px;">25.475</div>
<div class="t" style="left:136.70px;top:307.75px;font-size:12.5px;color:#000;letter-spacing:0.080px;">25.73</div>
<div class="t" style="left:136.70px;top:327.75px;font-size:12.5px;color:#000;letter-spacing:0.073px;">25.987</div>
<div class="t" style="left:136.70px;top:347.75px;font-size:12.5px;color:#000;letter-spacing:0.073px;">26.247</div>
<div class="t" style="left:136.70px;top:367.75px;font-size:12.5px;color:#000;letter-spacing:0.080px;">26.51</div>
<div class="t" style="left:136.70px;top:387.75px;font-size:12.5px;color:#000;letter-spacing:0.073px;">26.775</div>
<div class="t" style="left:136.70px;top:407.75px;font-size:12.5px;color:#000;letter-spacing:0.073px;">27.042</div>
<div class="t" style="left:136.70px;top:427.75px;font-size:12.5px;color:#000;letter-spacing:0.073px;">27.313</div>
<div class="t" style="left:136.70px;top:447.75px;font-size:12.5px;color:#000;letter-spacing:0.073px;">27.586</div>
<div class="t" style="left:136.70px;top:467.75px;font-size:12.5px;color:#000;letter-spacing:0.073px;">27.862</div>
<div class="t" style="left:136.70px;top:487.75px;font-size:12.5px;color:#000;letter-spacing:0.073px;">28.141</div>
<div class="t" style="left:136.70px;top:507.75px;font-size:12.5px;color:#000;letter-spacing:0.073px;">28.422</div>
<div class="t" style="left:136.70px;top:527.75px;font-size:12.5px;color:#000;letter-spacing:0.073px;">28.706</div>
<div class="t" style="left:136.70px;top:547.75px;font-size:12.5px;color:#000;letter-spacing:0.073px;">28.993</div>
<div class="t" style="left:289.70px;top:267.75px;font-size:12.5px;color:#000;letter-spacing:0.073px;">33.224</div>
<div class="t" style="left:289.70px;top:287.75px;font-size:12.5px;color:#000;letter-spacing:0.073px;">33.722</div>
<div class="t" style="left:289.70px;top:307.75px;font-size:12.5px;color:#000;letter-spacing:0.073px;">34.228</div>
<div class="t" style="left:289.70px;top:327.75px;font-size:12.5px;color:#000;letter-spacing:0.073px;">34.742</div>
<div class="t" style="left:289.70px;top:347.75px;font-size:12.5px;color:#000;letter-spacing:0.073px;">35.263</div>
<div class="t" style="left:289.70px;top:367.75px;font-size:12.5px;color:#000;letter-spacing:0.073px;">35.792</div>
<div class="t" style="left:289.70px;top:387.75px;font-size:12.5px;color:#000;letter-spacing:0.073px;">36.329</div>
<div class="t" style="left:289.70px;top:407.75px;font-size:12.5px;color:#000;letter-spacing:0.073px;">36.873</div>
<div class="t" style="left:289.70px;top:427.75px;font-size:12.5px;color:#000;letter-spacing:0.073px;">37.427</div>
<div class="t" style="left:289.70px;top:447.75px;font-size:12.5px;color:#000;letter-spacing:0.073px;">37.988</div>
<div class="t" style="left:289.70px;top:467.75px;font-size:12.5px;color:#000;letter-spacing:0.073px;">38.558</div>
<div class="t" style="left:289.70px;top:487.75px;font-size:12.5px;color:#000;letter-spacing:0.073px;">39.136</div>
<div class="t" style="left:289.70px;top:507.75px;font-size:12.5px;color:#000;letter-spacing:0.073px;">39.723</div>
<div class="t" style="left:289.70px;top:527.75px;font-size:12.5px;color:#000;letter-spacing:0.073px;">40.319</div>
<div class="t" style="left:289.70px;top:547.75px;font-size:12.5px;color:#000;letter-spacing:0.073px;">40.924</div>
<div class="t" style="left:442.70px;top:267.75px;font-size:12.5px;color:#000;letter-spacing:0.073px;">14.557</div>
<div class="t" style="left:442.70px;top:287.75px;font-size:12.5px;color:#000;letter-spacing:0.073px;">14.673</div>
<div class="t" style="left:442.70px;top:307.75px;font-size:12.5px;color:#000;letter-spacing:0.073px;">14.791</div>
<div class="t" style="left:442.70px;top:327.75px;font-size:12.5px;color:#000;letter-spacing:0.073px;">14.909</div>
<div class="t" style="left:442.70px;top:347.75px;font-size:12.5px;color:#000;letter-spacing:0.073px;">15.028</div>
<div class="t" style="left:442.70px;top:367.75px;font-size:12.5px;color:#000;letter-spacing:0.073px;">15.149</div>
<div class="t" style="left:442.70px;top:387.75px;font-size:12.5px;color:#000;letter-spacing:0.080px;">15.27</div>
<div class="t" style="left:442.70px;top:407.75px;font-size:12.5px;color:#000;letter-spacing:0.073px;">15.393</div>
<div class="t" style="left:442.70px;top:427.75px;font-size:12.5px;color:#000;letter-spacing:0.073px;">15.517</div>
<div class="t" style="left:442.70px;top:447.75px;font-size:12.5px;color:#000;letter-spacing:0.073px;">15.642</div>
<div class="t" style="left:442.70px;top:467.75px;font-size:12.5px;color:#000;letter-spacing:0.073px;">15.768</div>
<div class="t" style="left:442.70px;top:487.75px;font-size:12.5px;color:#000;letter-spacing:0.073px;">15.895</div>
<div class="t" style="left:442.70px;top:507.75px;font-size:12.5px;color:#000;letter-spacing:0.073px;">16.023</div>
<div class="t" style="left:442.70px;top:527.75px;font-size:12.5px;color:#000;letter-spacing:0.073px;">16.152</div>
<div class="t" style="left:442.70px;top:547.75px;font-size:12.5px;color:#000;letter-spacing:0.073px;">16.282</div>
<div class="t" style="left:591.70px;top:267.75px;font-size:12.5px;color:#000;letter-spacing:0.073px;">24.334</div>
<div class="t" style="left:591.70px;top:287.75px;font-size:12.5px;color:#000;letter-spacing:0.073px;">24.456</div>
<div class="t" style="left:591.70px;top:307.75px;font-size:12.5px;color:#000;letter-spacing:0.073px;">24.578</div>
<div class="t" style="left:591.70px;top:327.75px;font-size:12.5px;color:#000;letter-spacing:0.073px;">24.701</div>
<div class="t" style="left:591.70px;top:347.75px;font-size:12.5px;color:#000;letter-spacing:0.073px;">24.824</div>
<div class="t" style="left:591.70px;top:367.75px;font-size:12.5px;color:#000;letter-spacing:0.073px;">24.948</div>
<div class="t" style="left:591.70px;top:387.75px;font-size:12.5px;color:#000;letter-spacing:0.073px;">25.073</div>
<div class="t" style="left:591.70px;top:407.75px;font-size:12.5px;color:#000;letter-spacing:0.073px;">25.199</div>
<div class="t" style="left:591.70px;top:427.75px;font-size:12.5px;color:#000;letter-spacing:0.073px;">25.326</div>
<div class="t" style="left:591.70px;top:447.75px;font-size:12.5px;color:#000;letter-spacing:0.073px;">25.454</div>
<div class="t" style="left:591.70px;top:467.75px;font-size:12.5px;color:#000;letter-spacing:0.073px;">25.583</div>
<div class="t" style="left:591.70px;top:487.75px;font-size:12.5px;color:#000;letter-spacing:0.073px;">25.713</div>
<div class="t" style="left:591.70px;top:507.75px;font-size:12.5px;color:#000;letter-spacing:0.073px;">25.844</div>
<div class="t" style="left:591.70px;top:527.75px;font-size:12.5px;color:#000;letter-spacing:0.073px;">25.976</div>
<div class="t" style="left:591.70px;top:547.75px;font-size:12.5px;color:#000;letter-spacing:0.073px;">26.109</div>
<div class="t" style="left:68.50px;top:267.75px;font-size:12.5px;color:#000;letter-spacing:0.026px;">01.06.2019</div>
<div class="t" style="left:68.50px;top:287.75px;font-size:12.5px;color:#000;letter-spacing:0.026px;">02.06.2019</div>
<div class="t" style="left:68.50px;top:307.75px;font-size:12.5px;color:#000;letter-spacing:0.026px;">03.06.2019</div>
<div class="t" style="left:68.50px;top:327.75px;font-size:12.5px;color:#000;letter-spacing:0.026px;">04.06.2019</div>
<div class="t" style="left:68.50px;top:347.75px;font-size:12.5px;color:#000;letter-spacing:0.026px;">05.06.2019</div>
<div class="t" style="left:68.50px;top:367.75px;font-size:12.5px;color:#000;letter-spacing:0.026px;">06.06.2019</div>
<div class="t" style="left:68.50px;top:387.75px;font-size:12.5px;color:#000;letter-spacing:0.026px;">07.06.2019</div>
<div class="t" style="left:68.50px;top:407.75px;font-size:12.5px;color:#000;letter-spacing:0.026px;">08.06.2019</div>
<div class="t" style="left:68.50px;top:427.75px;font-size:12.5px;color:#000;letter-spacing:0.026px;">09.06.2019</div>
<div class="t" style="left:68.50px;top:447.75px;font-size:12.5px;color:#000;letter-spacing:0.026px;">10.06.2019</div>
<div class="t" style="left:68.50px;top:467.75px;font-size:12.5px;color:#000;letter-spacing:0.026px;">11.06.2019</div>
<div class="t" style="left:68.50px;top:487.75px;font-size:12.5px;color:#000;letter-spacing:0.026px;">12.06.2019</div>
<div class="t" style="left:68.50px;top:507.75px;font-size:12.5px;color:#000;letter-spacing:0.026px;">13.06.2019</div>
<div class="t" style="left:68.50px;top:527.75px;font-size:12.5px;color:#000;letter-spacing:0.026px;">14.06.2019</div>
<div class="t" style="left:68.50px;top:547.75px;font-size:12.5px;color:#000;letter-spacing:0.026px;">15.06.2019</div>
<div class="t" style="left:25.70px;top:226.75px;font-size:13.5px;color:#000;letter-spacing:0.091px;">Торговая точка/</div>
<div class="t" style="left:25.70px;top:246.75px;font-size:13.5px;color:#000;letter-spacing:0.085px;">Дата</div>
<div class="t" style="left:136.70px;top:226.75px;font-size:13.5px;color:#000;letter-spacing:0.149px;">Продажи по Торговой</div>
<div class="t" style="left:136.70px;top:246.75px;font-size:13.5px;color:#000;letter-spacing:0.048px;">точке 1, тыс. руб.</div>
<div class="t" style="left:289.70px;top:226.75px;font-size:13.5px;color:#000;letter-spacing:0.149px;">Продажи по Торговой</div>
<div class="t" style="left:289.70px;top:246.75px;font-size:13.5px;color:#000;letter-spacing:0.048px;">точке 2, тыс. руб.</div>
<div class="t" style="left:442.70px;top:226.75px;font-size:13.5px;color:#000;letter-spacing:0.149px;">Продажи по Торговой</div>
<div class="t" style="left:442.70px;top:246.75px;font-size:13.5px;color:#000;letter-spacing:0.048px;">точке 3, тыс. руб.</div>
<div class="t" style="left:591.70px;top:226.75px;font-size:13.5px;color:#000;letter-spacing:0.149px;">Продажи по Торговой</div>
<div class="t" style="left:591.70px;top:246.75px;font-size:13.5px;color:#000;letter-spacing:0.048px;">точке 4, тыс. руб.</div>

</div>
<!--BOTTOM-->
<!--sheet tab bar-->
<div class="b" style="left:2px;top:676px;width:1018px;height:28px;background:#e6e6e6"></div>
<div class="b" style="left:2px;top:676px;width:1001px;height:1px;background:#9b9b9b"></div>
<div class="b" style="left:98px;top:676px;width:107px;height:25px;background:#fff;border-left:1px solid #9b9b9b;border-right:1px solid #9b9b9b"></div>
<div class="b" style="left:98px;top:699px;width:107px;height:2px;background:#15733f"></div>
<svg style="left:24px;top:685px" width="6" height="9"><path d="M5 0V9L0 4.5Z" fill="#c6c6c6"/></svg>
<svg style="left:53px;top:685px" width="6" height="9"><path d="M0 0V9L5 4.5Z" fill="#c6c6c6"/></svg>
<svg style="left:238px;top:682px" width="16" height="16"><circle cx="8" cy="8" r="7" fill="none" stroke="#6a6a6a" stroke-width="1.2"/><path d="M4.5 8H11.5M8 4.5V11.5" stroke="#6a6a6a" stroke-width="1.4"/></svg>
<!--hscroll-->
<svg style="left:612px;top:683px" width="3" height="14"><circle cx="1.5" cy="2" r="1" fill="#b0b0b0"/><circle cx="1.5" cy="7" r="1" fill="#b0b0b0"/><circle cx="1.5" cy="12" r="1" fill="#b0b0b0"/></svg>
<div class="b" style="left:630px;top:683px;width:373px;height:15px;background:#d4d4d4"></div>
<div class="b" style="left:630px;top:683px;width:15px;height:15px;background:#fff;border:1px solid #ababab"></div>
<div class="b" style="left:644px;top:683px;width:305px;height:15px;background:#fff;border:1px solid #ababab"></div>
<div class="b" style="left:988px;top:683px;width:15px;height:15px;background:#fff;border:1px solid #ababab"></div>
<svg style="left:635px;top:687px" width="4" height="7"><path d="M4 0V7L0 3.5Z" fill="#606060"/></svg>
<svg style="left:994px;top:687px" width="4" height="7"><path d="M0 0V7L4 3.5Z" fill="#606060"/></svg>
<!--vscroll-->
<div class="b" style="left:1006px;top:205px;width:14px;height:471px;background:#d4d4d4"></div>
<div class="b" style="left:1006px;top:205px;width:14px;height:15px;background:#fff;border:1px solid #ababab"></div>
<div class="b" style="left:1006px;top:220px;width:14px;height:420px;background:#fff;border:1px solid #ababab"></div>
<div class="b" style="left:1006px;top:662px;width:14px;height:15px;background:#fff;border:1px solid #ababab"></div>
<svg style="left:1010px;top:210px" width="7" height="4"><path d="M0 4H7L3.5 0Z" fill="#606060"/></svg>
<svg style="left:1010px;top:668px" width="7" height="4"><path d="M0 0H7L3.5 4Z" fill="#606060"/></svg>
<!--status bar-->
<div class="b" style="left:2px;top:704px;width:1018px;height:21px;background:#f3f3f3"></div>
<div class="b" style="left:2px;top:704px;width:1018px;height:1px;background:#dcdcdc"></div>
<div class="b" style="left:724px;top:705px;width:38px;height:20px;background:#c8c8c8"></div>
<svg style="left:736px;top:708px" width="14" height="14"><path d="M0.5 0.5H13.5V12.5H0.5ZM0.5 4.5H13.5M0.5 8.5H13.5M4.8 0.5V12.5M9.2 0.5V12.5" fill="none" stroke="#6a6a6a" stroke-width="1"/></svg>
<svg style="left:774px;top:708px" width="15" height="14"><rect x="0.5" y="0.5" width="13" height="12" fill="none" stroke="#6a6a6a" stroke-width="1"/><rect x="3.5" y="3.5" width="7" height="6" fill="none" stroke="#6a6a6a" stroke-width="1"/><path d="M5 5.5H9M5 7.5H9" stroke="#6a6a6a" stroke-width="0.8"/></svg>
<svg style="left:812px;top:708px" width="15" height="14"><path d="M0.5 0.5H13.5V12.5H0.5ZM4.5 0.5V6.5H13.5M9 0.5V6.5" fill="none" stroke="#6a6a6a" stroke-width="1"/></svg>
<div class="b" style="left:843px;top:714px;width:6px;height:2px;background:#6a6a6a"></div>
<div class="b" style="left:853px;top:714px;width:100px;height:1px;background:#a8a8a8"></div>
<div class="b" style="left:901px;top:709px;width:5px;height:11px;background:#6a6a6a"></div>
<div class="b" style="left:956px;top:714px;width:8px;height:2px;background:#6a6a6a"></div>
<div class="b" style="left:959px;top:711px;width:2px;height:8px;background:#6a6a6a"></div>
<!--macro icon-->
<svg style="left:6px;top:708px" width="14" height="14"><circle cx="3" cy="3" r="2.9" fill="#5a5359"/><rect x="1.2" y="4" width="11.6" height="9" fill="#fff"/><path d="M7 2.2H12.4V12.4H1.6V7" fill="none" stroke="#4a4449" stroke-width="1.2"/><rect x="7" y="1" width="6" height="2.4" fill="#4a4449"/><path d="M3.4 8.4H5.2M6.4 6.4H8.2M9.4 6.4H11.2M6.4 8.4H8.2M9.4 8.4H11.2M3.4 10.4H5.2M6.4 10.4H8.2M9.4 10.4H11.2" stroke="#4a4449" stroke-width="0.9"/></svg>

<div class="t" style="left:419.70px;top:11.00px;font-size:12px;color:#ffffff;letter-spacing:-0.229px;">Замена точек на запятые  -  Excel</div>
<div class="t" style="left:794.20px;top:10.00px;font-size:12px;color:#1a7044;letter-spacing:-0.862px;">Вход</div>
<div class="t" style="left:12.20px;top:43.00px;font-size:12px;color:#ffffff;letter-spacing:0.195px;">Файл</div>
<div class="t" style="left:70.70px;top:43.00px;font-size:12px;color:#1a7044;letter-spacing:-0.293px;">Главная</div>
<div class="t" style="left:142.20px;top:43.00px;font-size:12px;color:#ffffff;letter-spacing:-0.397px;">Вставка</div>
<div class="t" style="left:210.20px;top:43.00px;font-size:12px;color:#ffffff;letter-spacing:-0.152px;">Разметка страницы</div>
<div class="t" style="left:343.20px;top:43.00px;font-size:12px;color:#ffffff;letter-spacing:0.373px;">Формулы</div>
<div class="t" style="left:422.70px;top:43.00px;font-size:12px;color:#ffffff;letter-spacing:0.248px;">Данные</div>
<div class="t" style="left:492.20px;top:43.00px;font-size:12px;color:#ffffff;letter-spacing:-0.182px;">Рецензирование</div>
<div class="t" style="left:608.70px;top:43.00px;font-size:12px;color:#ffffff;letter-spacing:-0.559px;">Вид</div>
<div class="t" style="left:654.70px;top:43.00px;font-size:12px;color:#ffffff;letter-spacing:-0.018px;">Разработчик</div>
<div class="t" style="left:750.70px;top:43.00px;font-size:12px;color:#ffffff;letter-spacing:-0.035px;">Справка</div>
<div class="t" style="left:847.20px;top:43.00px;font-size:12px;color:#ffffff;letter-spacing:0.473px;">Помощн</div>
<div class="t" style="left:934.70px;top:43.00px;font-size:12px;color:#ffffff;letter-spacing:-0.260px;">Поделиться</div>
<div class="t" style="left:3.20px;top:142.00px;font-size:12px;color:#262626;letter-spacing:-0.509px;">Буфер обмена</div>
<div class="t" style="left:180.70px;top:142.00px;font-size:12px;color:#262626;letter-spacing:0.088px;">Шрифт</div>
<div class="t" style="left:354.20px;top:142.00px;font-size:12px;color:#262626;letter-spacing:-0.239px;">Выравнивание</div>
<div class="t" style="left:510.70px;top:142.00px;font-size:12px;color:#262626;letter-spacing:-0.448px;">Число</div>
<div class="t" style="left:670.70px;top:142.00px;font-size:12px;color:#262626;letter-spacing:-0.620px;">Стили</div>
<div class="t" style="left:823.70px;top:142.00px;font-size:12px;color:#262626;letter-spacing:0.070px;">Ячейки</div>
<div class="t" style="left:901.20px;top:142.00px;font-size:12px;color:#262626;letter-spacing:-0.393px;">Редактирование</div>
<div class="t" style="left:8.50px;top:107.00px;font-size:12px;color:#a6a6a6;letter-spacing:-0.500px;">Вставить</div>
<div class="t" style="left:113.40px;top:81.00px;font-size:12px;color:#262626;letter-spacing:-0.019px;">Calibri</div>
<div class="t" style="left:224.20px;top:81.00px;font-size:12px;color:#262626;letter-spacing:-1.200px;">11</div>
<div class="t" style="left:114.40px;top:110.75px;font-size:12.5px;color:#444;font-weight:bold;">Ж</div>
<div class="t" style="left:137.70px;top:110.75px;font-size:12.5px;color:#444;font-weight:bold;font-style:italic;">К</div>
<div class="t" style="left:160.40px;top:110.75px;font-size:12.5px;color:#444;font-weight:bold;">Ч</div>
<div class="t" style="left:500.50px;top:73.00px;font-size:12px;color:#262626;letter-spacing:0.275px;">Общий</div>
<div class="t" style="left:613.00px;top:73.00px;font-size:12px;color:#262626;letter-spacing:-0.065px;">Условное форматирование</div>
<div class="t" style="left:613.00px;top:96.00px;font-size:12px;color:#262626;letter-spacing:-0.038px;">Форматировать как таблицу</div>
<div class="t" style="left:613.00px;top:119.00px;font-size:12px;color:#262626;letter-spacing:-0.137px;">Стили ячеек</div>
<div class="t" style="left:822.20px;top:73.00px;font-size:12px;color:#262626;letter-spacing:-0.443px;">Вставить</div>
<div class="t" style="left:822.20px;top:96.00px;font-size:12px;color:#262626;letter-spacing:-0.494px;">Удалить</div>
<div class="t" style="left:822.20px;top:119.00px;font-size:12px;color:#262626;letter-spacing:0.042px;">Формат</div>
<div class="t" style="left:536.30px;top:94.25px;font-size:14.5px;color:#555;">%</div>
<div class="t" style="left:556.70px;top:95.75px;font-size:9.5px;color:#444;letter-spacing:-0.430px;">000</div>
<div class="t" style="left:9.70px;top:174.75px;font-size:12.5px;color:#262626;letter-spacing:0.303px;">B2</div>
<div class="t" style="left:259.70px;top:174.75px;font-size:12.5px;color:#262626;letter-spacing:0.273px;">25.223</div>
<div class="t" style="left:74.83px;top:206.75px;font-size:12.5px;color:#262626;">A</div>
<div class="t" style="left:767.68px;top:206.75px;font-size:12.5px;color:#262626;">F</div>
<div class="t" style="left:830.13px;top:206.75px;font-size:12.5px;color:#262626;">G</div>
<div class="t" style="left:894.48px;top:206.75px;font-size:12.5px;color:#262626;">H</div>
<div class="t" style="left:961.26px;top:206.75px;font-size:12.5px;color:#262626;">I</div>
<div class="t" style="left:206.83px;top:206.75px;font-size:12.5px;color:#1a7044;">B</div>
<div class="t" style="left:359.48px;top:206.75px;font-size:12.5px;color:#1a7044;">C</div>
<div class="t" style="left:510.48px;top:206.75px;font-size:12.5px;color:#1a7044;">D</div>
<div class="t" style="left:659.83px;top:206.75px;font-size:12.5px;color:#1a7044;">E</div>
<div class="t" style="left:7.22px;top:247.75px;font-size:12.5px;color:#262626;">1</div>
<div class="t" style="left:110.20px;top:683.00px;font-size:13px;color:#1a7044;font-weight:bold;letter-spacing:-0.121px;">microexcel.ru</div>
<div class="t" style="left:626.40px;top:708.50px;font-size:11px;color:#444;letter-spacing:0.162px;">Количество: 60</div>
<div class="t" style="left:975.70px;top:708.50px;font-size:11px;color:#444;letter-spacing:-0.526px;">100 %</div>

<!--DIALOG-->
<div id="dlg" class="b" style="left:0;top:0;width:1021px;height:726px">
<div class="b" style="left:431px;top:397px;width:480px;height:242px;background:#f0f0f0;border:1px solid #a0a0a0;box-shadow:0 1px 7px 1px rgba(0,0,0,.33)"></div>
<div class="b" style="left:432px;top:398px;width:478px;height:30px;background:#fff"></div>
<svg style="left:881px;top:407px" width="12" height="12"><path d="M0.5 0.5L11 11M11 0.5L0.5 11" stroke="#777" stroke-width="1" fill="none"/></svg>
<!--tab panel-->
<div class="b" style="left:438px;top:456px;width:464px;height:144px;background:#fff;border:1px solid #d9d9d9"></div>
<div class="b" style="left:440px;top:437px;width:51px;height:20px;background:#f0f0f0;border:1px solid #d9d9d9;border-right:none"></div>
<div class="b" style="left:490px;top:435px;width:73px;height:22px;background:#fff;border:1px solid #d9d9d9;border-bottom:none"></div>
<!--combos row1/2-->
<div class="cb" style="left:526px;top:466px;width:149px;height:20px;border-color:#a9acae"></div>
<div class="cb" style="left:526px;top:489px;width:149px;height:20px;border-color:#a9acae"></div>
<div class="b" style="left:657px;top:467px;width:17px;height:18px;background:#e1e1e1;border:1px solid #a9acae"></div>
<div class="b" style="left:657px;top:490px;width:17px;height:18px;background:#e1e1e1;border:1px solid #a9acae"></div>
<svg style="left:661px;top:474px" width="9" height="6"><path d="M0.4 0.6L4.2 4.4L8 0.6" stroke="#555" stroke-width="1.1" fill="none"/></svg>
<svg style="left:661px;top:497px" width="9" height="6"><path d="M0.4 0.6L4.2 4.4L8 0.6" stroke="#555" stroke-width="1.1" fill="none"/></svg>
<!--format preview boxes-->
<div class="b" style="left:684px;top:466px;width:111px;height:20px;background:#fff;border:1px solid #000"></div>
<div class="b" style="left:684px;top:489px;width:111px;height:20px;background:#fff;border:1px solid #000"></div>
<!--format buttons-->
<div class="btn" style="left:805px;top:467px;width:89px;height:18px"></div>
<div class="btn" style="left:805px;top:490px;width:89px;height:18px;border:2px solid #0078d7"></div>
<div class="b" style="left:882px;top:493px;width:1px;height:12px;background:#8a8a8a"></div>
<svg style="left:886px;top:475px" width="6" height="3"><path d="M0 0H5.6L2.8 3Z" fill="#000"/></svg>
<svg style="left:886px;top:498px" width="6" height="3"><path d="M0 0H5.6L2.8 3Z" fill="#000"/></svg>
<!--combos options-->
<div class="cb" style="left:544px;top:520px;width:100px;height:21px;border-color:#ababab"></div>
<div class="cb" style="left:544px;top:545px;width:100px;height:21px;border-color:#ababab"></div>
<div class="cb" style="left:544px;top:570px;width:100px;height:21px;border-color:#ababab"></div>
<div class="b" style="left:626px;top:521px;width:17px;height:19px;background:#e6e6e6;border:1px solid #adadad"></div>
<div class="b" style="left:626px;top:546px;width:17px;height:19px;background:#e6e6e6;border:1px solid #adadad"></div>
<div class="b" style="left:626px;top:571px;width:17px;height:19px;background:#e6e6e6;border:1px solid #adadad"></div>
<svg style="left:630px;top:528px" width="10" height="6"><path d="M0.5 0.5L5 5L9.5 0.5" stroke="#444" fill="none"/></svg>
<svg style="left:630px;top:553px" width="10" height="6"><path d="M0.5 0.5L5 5L9.5 0.5" stroke="#444" fill="none"/></svg>
<svg style="left:630px;top:578px" width="10" height="6"><path d="M0.5 0.5L5 5L9.5 0.5" stroke="#444" fill="none"/></svg>
<!--checkboxes-->
<div class="b" style="left:653px;top:520px;width:13px;height:13px;background:#fff;border:1px solid #333"></div>
<div class="b" style="left:653px;top:539px;width:13px;height:13px;background:#fff;border:1px solid #333"></div>
<!--params button-->
<div class="btn" style="left:797px;top:568px;width:97px;height:22px"></div>
<!--bottom buttons-->
<div class="btn" style="left:452px;top:609px;width:88px;height:22px"></div>
<div class="btn" style="left:550px;top:609px;width:74px;height:22px"></div>
<div class="btn" style="left:643px;top:609px;width:75px;height:22px"></div>
<div class="btn" style="left:727px;top:609px;width:84px;height:22px"></div>
<div class="btn" style="left:830px;top:609px;width:73px;height:22px"></div>
<div class="b" style="left:444px;top:603px;width:101px;height:33px;border:3px solid #f00a0a;border-radius:10px"></div>

<div class="t" style="left:440.20px;top:407.00px;font-size:12px;color:#9aa39e;letter-spacing:-0.146px;">Найти и заменить</div>
<div class="t" style="left:837.70px;top:407.00px;font-size:12px;color:#8a8a8a;">?</div>
<div class="t" style="left:449.10px;top:442.00px;font-size:12px;color:#000;letter-spacing:-0.337px;">На<u>й</u>ти</div>
<div class="t" style="left:500.70px;top:442.00px;font-size:12px;color:#000;letter-spacing:-0.334px;">Заменит<u>ь</u></div>
<div class="t" style="left:447.20px;top:470.00px;font-size:12px;color:#000;letter-spacing:-0.399px;">Найт<u>и</u>:</div>
<div class="t" style="left:447.20px;top:493.00px;font-size:12px;color:#000;letter-spacing:-0.393px;">З<u>а</u>менить на:</div>
<div class="t" style="left:530.70px;top:470.00px;font-size:12px;color:#000;">.</div>
<div class="t" style="left:530.70px;top:493.00px;font-size:12px;color:#000;">,</div>
<div class="t" style="left:694.70px;top:470.00px;font-size:12px;color:#000;letter-spacing:-0.410px;">Формат не задан</div>
<div class="t" style="left:708.20px;top:492.00px;font-size:14px;color:#000;letter-spacing:-0.008px;">Образец*</div>
<div class="t" style="left:824.20px;top:470.00px;font-size:12px;color:#000;letter-spacing:-0.353px;">Форма<u>т</u>...</div>
<div class="t" style="left:824.20px;top:493.00px;font-size:12px;color:#000;letter-spacing:-0.353px;">Форма<u>т</u>...</div>
<div class="t" style="left:447.70px;top:524.00px;font-size:12px;color:#000;letter-spacing:-0.590px;">И<u>с</u>кать:</div>
<div class="t" style="left:447.70px;top:549.00px;font-size:12px;color:#000;letter-spacing:-0.371px;">Прос<u>м</u>атривать:</div>
<div class="t" style="left:447.70px;top:574.00px;font-size:12px;color:#000;letter-spacing:-0.358px;">О<u>б</u>ласть поиска:</div>
<div class="t" style="left:548.40px;top:524.00px;font-size:12px;color:#000;letter-spacing:-0.559px;">на листе</div>
<div class="t" style="left:548.40px;top:549.00px;font-size:12px;color:#000;letter-spacing:-0.070px;">по строкам</div>
<div class="t" style="left:548.40px;top:574.00px;font-size:12px;color:#000;letter-spacing:-0.535px;">формулы</div>
<div class="t" style="left:669.30px;top:521.00px;font-size:12px;color:#000;letter-spacing:-0.227px;"><u>У</u>читывать регистр</div>
<div class="t" style="left:669.30px;top:540.00px;font-size:12px;color:#000;letter-spacing:-0.100px;">Ячейка <u>ц</u>еликом</div>
<div class="t" style="left:805.20px;top:574.00px;font-size:12px;color:#000;letter-spacing:-0.497px;"><u>П</u>араметры &lt; &lt;</div>
<div class="t" style="left:459.70px;top:614.00px;font-size:12px;color:#000;letter-spacing:-0.430px;">Заменить <u>в</u>се</div>
<div class="t" style="left:560.70px;top:614.00px;font-size:12px;color:#000;letter-spacing:-0.391px;"><u>З</u>аменить</div>
<div class="t" style="left:653.20px;top:614.00px;font-size:12px;color:#000;letter-spacing:-0.443px;"><u>Н</u>айти все</div>
<div class="t" style="left:734.70px;top:614.00px;font-size:12px;color:#000;letter-spacing:-0.504px;">Найти да<u>л</u>ее</div>
<div class="t" style="left:844.20px;top:614.00px;font-size:12px;color:#000;letter-spacing:-0.270px;">Закрыть</div>

</div>
<div class="b" style="left:1px;top:64px;width:1px;height:93px;background:#f8f8f8"></div>
<div class="b" style="left:1px;top:704px;width:1px;height:21px;background:#f8f8f8"></div>
<div class="b" style="left:1px;top:724px;width:1019px;height:1px;background:#f8f8f8"></div>
<div class="b" style="left:0;top:0;width:1px;height:726px;background:#007640"></div>
<div class="b" style="left:1020px;top:0;width:1px;height:726px;background:#007640"></div>
<div class="b" style="left:0;top:725px;width:1021px;height:1px;background:#007640"></div>
</div>
</body></html>
